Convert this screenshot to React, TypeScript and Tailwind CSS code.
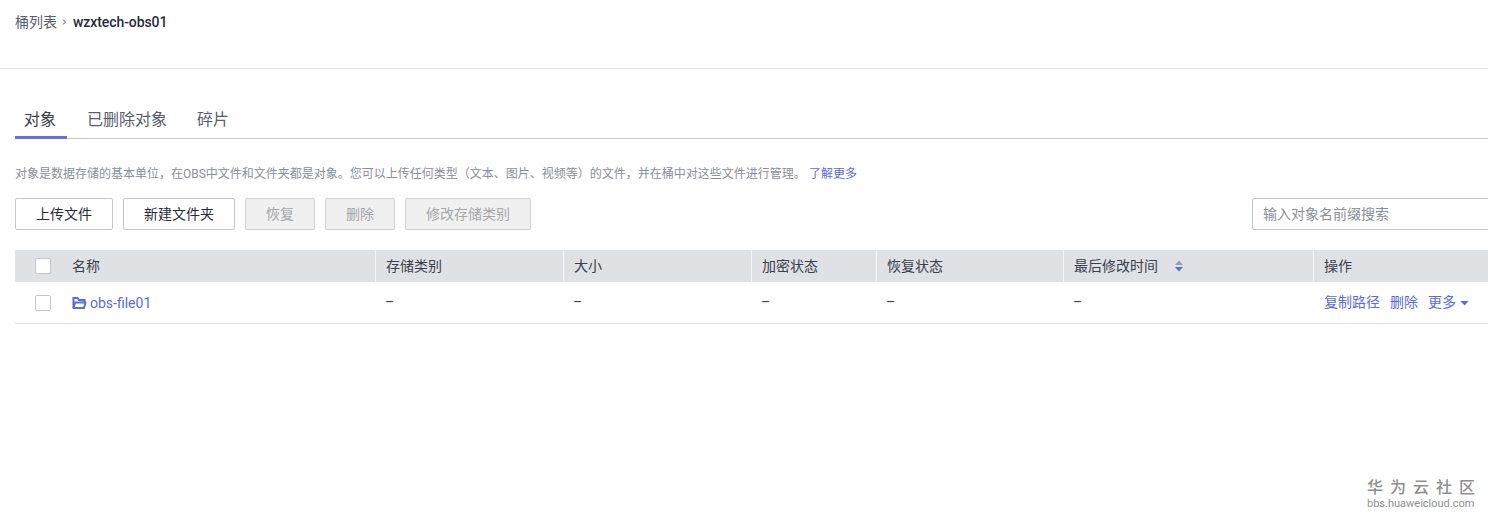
import React from "react";

const cols = "grid grid-cols-[360px_188px_188px_125px_187px_250px_199px]";

function Check() {
  return <span className="block w-4 h-4 bg-white border border-[#c4c6cc] rounded-[2px]" />;
}

function Btn({ children, disabled, w }: { children: React.ReactNode; disabled?: boolean; w: string }) {
  return disabled ? (
    <button className={`h-8 ${w} border border-[#d0d2d6] rounded-[2px] bg-[#f0f0f0] text-[#a5a7ab] text-[14px]`}>{children}</button>
  ) : (
    <button className={`h-8 ${w} border border-[#c4c6cc] rounded-[2px] bg-white text-[#252b3a] text-[14px]`}>{children}</button>
  );
}

function Th({ children }: { children?: React.ReactNode }) {
  return <div className="h-8 flex items-center pl-[10px] border-l border-[#f4f5f6] text-[14px] text-[#3a3f4a]">{children}</div>;
}

function Td({ children }: { children?: React.ReactNode }) {
  return <div className="h-[41px] flex items-center pl-[10px] text-[14px] text-[#3a3f4a]">{children}</div>;
}

export default function App() {
  return (
    <div className="relative w-[1488px] h-[518px] overflow-hidden bg-white" style={{ fontFamily: 'Roboto, "Noto Sans CJK SC", sans-serif' }}>
      <div className="h-[69px] border-b border-[#e3e3e3] pl-[15px] pt-[13px] flex items-start text-[14px] leading-[18px]">
        <span className="text-[#575d6c]">桶列表</span>
        <svg width="16" height="18" viewBox="0 0 16 18" fill="none" stroke="#575d6c" strokeWidth="1"><path d="M6 6.500 8.500 9 6 11.500" /></svg>
        <span className="text-[#252b3a] font-medium tracking-[-0.08px]">wzxtech-obs01</span>
      </div>

      <div className="pl-[15px] w-[1512px]">
        <div className="mt-[34px] h-[36px] flex items-start border-b border-[#c8cace] text-[16px] leading-[34px] w-[1473px]">
          <div className="h-[36px] w-[52px] pr-[2px] text-center text-[#3a3f4a] border-b-[3px] border-[#666de8]">对象</div>
          <div className="ml-5 text-[#575d6c]">已删除对象</div>
          <div className="ml-[30px] text-[#575d6c]">碎片</div>
        </div>

        <div className="mt-[26px] h-[18px] flex items-center text-[12px] text-[#8a8e99] whitespace-nowrap">
          对象是数据存储的基本单位，在OBS中文件和文件夹都是对象。您可以上传任何类型（文本、图片、视频等）的文件，并在桶中对这些文件进行管理。
          <span className="ml-[3px] text-[#5a6ae0]">了解更多</span>
        </div>

        <div className="mt-[15px] flex items-center">
          <div className="flex gap-[10px]">
            <Btn w="w-[98px]">上传文件</Btn>
            <Btn w="w-[112px]">新建文件夹</Btn>
            <Btn w="w-[70px]" disabled>恢复</Btn>
            <Btn w="w-[70px]" disabled>删除</Btn>
            <Btn w="w-[126px]" disabled>修改存储类别</Btn>
          </div>
          <input
            readOnly
            placeholder="输入对象名前缀搜索"
            className="ml-[721px] h-8 w-[260px] border border-[#c4c6cc] rounded-[2px] pl-[10px] text-[14px] placeholder:text-[#8a8e99] outline-none"
          />
        </div>

        <div className={`mt-5 ${cols} bg-[#dfe1e4] w-[1497px]`}>
          <div className="h-8 flex items-center pl-5 text-[14px] text-[#3a3f4a]">
            <Check />
            <span className="ml-[21px]">名称</span>
          </div>
          <Th>存储类别</Th>
          <Th>大小</Th>
          <Th>加密状态</Th>
          <Th>恢复状态</Th>
          <Th>
            最后修改时间
            <svg className="ml-4" width="10" height="14" viewBox="0 0 10 14">
              <path d="M5 1.500 9 6H1z" fill="#9aa0ab" />
              <path d="M5 12.500 1 8h8z" fill="#5a6ae0" />
            </svg>
          </Th>
          <Th>操作</Th>
        </div>

        <div className={`${cols} border-b border-[#dfe1e4] w-[1473px]`}>
          <div className="h-[41px] flex items-center pl-5 text-[14px] text-[#5a6ae0]">
            <Check />
            <svg className="ml-[21px]" width="15" height="14" viewBox="0 0 15 14" fill="none" stroke="#5a6ae0" strokeWidth="2">
              <path d="M1.500 12V2h4l1.500 2h5.500v2.500" />
              <path d="M1.500 12 3 6.500h10.500L12 12z" strokeLinejoin="round" />
            </svg>
            <span className="ml-[3px] pt-[1px]">obs-file01</span>
          </div>
          <Td>–</Td>
          <Td>–</Td>
          <Td>–</Td>
          <Td>–</Td>
          <Td>–</Td>
          <div className="h-[41px] flex items-center pl-[11px] text-[14px] text-[#5a6ae0] whitespace-nowrap">
            <span>复制路径</span>
            <span className="ml-[10px]">删除</span>
            <span className="ml-[10px]">更多</span>
            <svg className="ml-1" width="9" height="6" viewBox="0 0 9 6"><path d="M.5 1h8L4.500 5.500z" fill="#5a6ae0" /></svg>
          </div>
        </div>
      </div>

      <div className="absolute left-[1367px] top-[478px] text-[#8f8f8f]">
        <div className="text-[16px] leading-[20px] font-medium tracking-[7px] whitespace-nowrap">华为云社区</div>
        <div className="text-[11px] leading-[12px] whitespace-nowrap">bbs.huaweicloud.com</div>
      </div>
    </div>
  );
}
